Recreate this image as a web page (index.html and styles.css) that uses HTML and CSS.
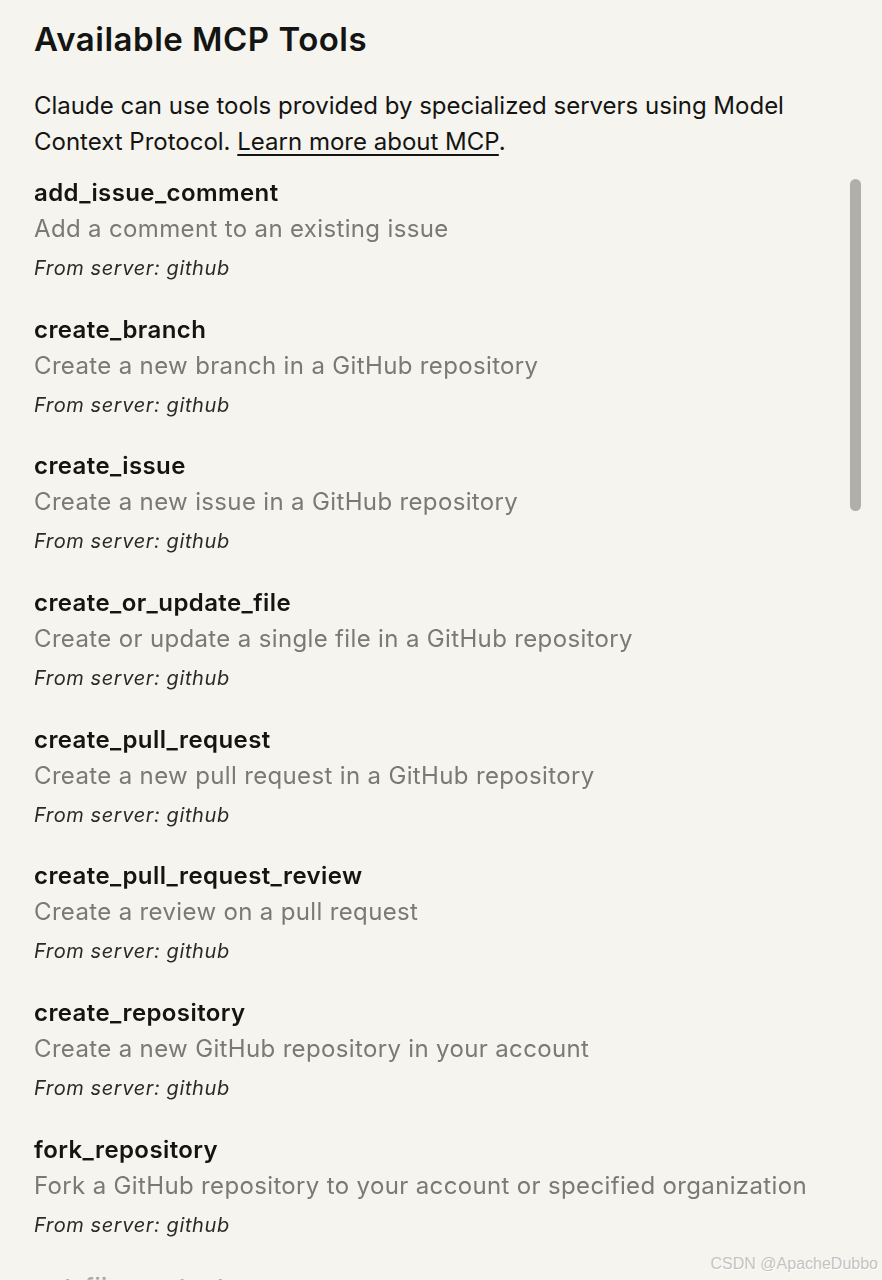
FILE: index.html
```html
<!DOCTYPE html>
<html lang="en">
<head>
<meta charset="utf-8">
<title>Available MCP Tools</title>
<link rel="stylesheet" href="styles.css">
</head>
<body>
<div class="page">
  <header class="head">
    <h1 class="title">Available MCP Tools</h1>
    <p class="intro">Claude can use tools provided by specialized servers using Model Context Protocol. <a class="link" href="#">Learn more about MCP</a>.</p>
  </header>
  <div class="list-wrap">
    <ul class="tools">
      <li class="tool"><div class="name">add_issue_comment</div><div class="desc">Add a comment to an existing issue</div><div class="from">From server: github</div></li>
      <li class="tool"><div class="name">create_branch</div><div class="desc">Create a new branch in a GitHub repository</div><div class="from">From server: github</div></li>
      <li class="tool"><div class="name">create_issue</div><div class="desc">Create a new issue in a GitHub repository</div><div class="from">From server: github</div></li>
      <li class="tool"><div class="name">create_or_update_file</div><div class="desc">Create or update a single file in a GitHub repository</div><div class="from">From server: github</div></li>
      <li class="tool"><div class="name">create_pull_request</div><div class="desc">Create a new pull request in a GitHub repository</div><div class="from">From server: github</div></li>
      <li class="tool"><div class="name">create_pull_request_review</div><div class="desc">Create a review on a pull request</div><div class="from">From server: github</div></li>
      <li class="tool"><div class="name">create_repository</div><div class="desc">Create a new GitHub repository in your account</div><div class="from">From server: github</div></li>
      <li class="tool"><div class="name">fork_repository</div><div class="desc">Fork a GitHub repository to your account or specified organization</div><div class="from">From server: github</div></li>
      <li class="tool"><div class="name">get_file_contents</div><div class="desc">Get the contents of a file or directory from a GitHub repository</div><div class="from">From server: github</div></li>
    </ul>
    <div class="thumb"></div>
  </div>
  <div class="watermark">CSDN @ApacheDubbo</div>
</div>
</body>
</html>
```
FILE: styles.css
```css
html, body {
  margin: 0;
  padding: 0;
  background: #f5f4ee;
}
body {
  font-family: Inter, "Noto Sans", sans-serif;
  color: #141413;
  height: 1280px;
  overflow: hidden;
}
.page {
  position: relative;
  height: 1280px;
  overflow: hidden;
}
.head {
  padding: 19px 34px 0 34px;
}
.title {
  margin: 0;
  font-size: 33px;
  line-height: 40px;
  font-weight: 600;
  letter-spacing: 0.5px;
}
.intro {
  margin: 29px 0 0 0;
  font-size: 24px;
  line-height: 36px;
  font-weight: 400;
  max-width: 790px;
}
.link {
  color: inherit;
  text-decoration: underline;
  text-decoration-thickness: 1.5px;
  text-underline-offset: 4px;
}
.list-wrap {
  position: relative;
  margin-top: 15px;
  height: 1120px;
  -webkit-mask-image: linear-gradient(to bottom, #000 1085px, transparent 1112px);
  mask-image: linear-gradient(to bottom, #000 1085px, transparent 1112px);
}
.tools {
  list-style: none;
  margin: 0;
  padding: 0 34px;
}
.tool {
  margin-bottom: 22.7px;
}
.name {
  font-size: 24px;
  line-height: 36px;
  font-weight: 600;
  letter-spacing: 0.4px;
  color: #141413;
}
.desc {
  font-size: 24px;
  line-height: 36px;
  letter-spacing: 0.35px;
  color: #7a7975;
}
.from {
  font-size: 20px;
  line-height: 42px;
  font-style: italic;
  letter-spacing: 0.6px;
  color: #2a2a28;
}
.thumb {
  position: absolute;
  left: 850px;
  top: 4px;
  width: 11px;
  height: 332px;
  border-radius: 6px;
  background: #b0b0a9;
}
.watermark {
  position: absolute;
  right: 4px;
  bottom: 7px;
  font-family: "Liberation Sans", Arial, sans-serif;
  font-size: 16px;
  color: #c4c4c0;
  text-shadow: 1px 1px 0 #ffffff;
}
```
